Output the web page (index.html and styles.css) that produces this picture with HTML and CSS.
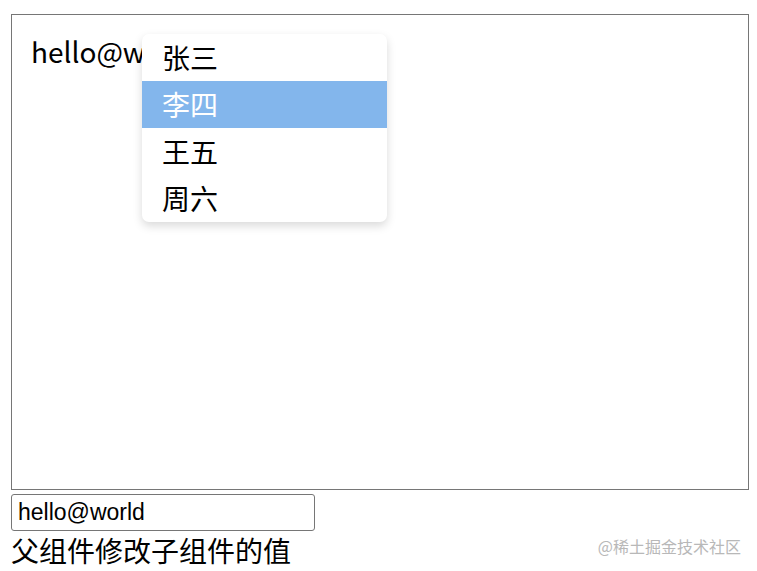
FILE: index.html
```html
<!DOCTYPE html>
<html lang="zh-CN">
<head>
    <meta charset="UTF-8">
    <title>父组件修改子组件的值</title>
    <link rel="stylesheet" href="styles.css">
</head>
<body>
    <div class="page">
        <div class="editor">
            <div class="editor-text">hello@w</div>
            <ul class="mention-list">
                <li>张三</li>
                <li class="active">李四</li>
                <li>王五</li>
                <li>周六</li>
            </ul>
        </div>
        <input class="value-input" type="text" value="hello@world">
        <div class="caption">父组件修改子组件的值</div>
    </div>
    <div class="watermark">@稀土掘金技术社区</div>
</body>
</html>
```

FILE: styles.css
```css
* {
    margin: 0;
    padding: 0;
    box-sizing: border-box;
}

body {
    font-family: "Noto Sans CJK SC", sans-serif;
    background: #fff;
    color: #000;
    width: 757px;
    height: 571px;
    overflow: hidden;
    position: relative;
}

.page {
    padding: 14px 8px 0 11px;
}

.editor {
    position: relative;
    height: 476px;
    border: 1px solid #767676;
    padding: 16px 19px;
}

.editor-text {
    font-size: 28px;
    line-height: 40px;
}

.mention-list {
    position: absolute;
    left: 130px;
    top: 19px;
    width: 245px;
    list-style: none;
    background: #fff;
    border-radius: 7px;
    box-shadow: 0 4px 10px rgba(0, 0, 0, 0.15);
    overflow: hidden;
}

.mention-list li {
    height: 47px;
    line-height: 47px;
    padding-left: 20px;
    font-size: 28px;
}

.mention-list li.active {
    background: #83b6ec;
    color: #fff;
}

.value-input {
    display: block;
    margin-top: 4px;
    width: 304px;
    height: 37px;
    border: 1px solid #767676;
    border-radius: 3px;
    padding: 0 6px;
    font-family: "Liberation Sans", Arial, sans-serif;
    font-size: 23px;
    color: #000;
}

.caption {
    font-size: 28px;
    line-height: 38px;
}

.watermark {
    position: absolute;
    right: 16px;
    bottom: 16px;
    font-size: 16px;
    color: #b8b8b8;
    line-height: 18px;
}
```
